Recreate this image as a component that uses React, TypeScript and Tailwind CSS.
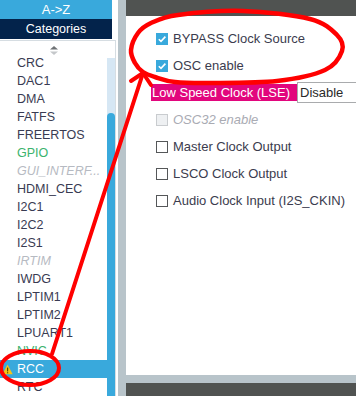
import React from "react";

type Pt = [number, number];

// closed catmull-rom curve through hand-picked points (for the marker scribbles)
function smoothPath(pts: Pt[]) {
  const n = pts.length;
  let d = `M${pts[0][0]},${pts[0][1]}`;
  for (let i = 0; i < n; i++) {
    const p0 = pts[(i - 1 + n) % n];
    const p1 = pts[i];
    const p2 = pts[(i + 1) % n];
    const p3 = pts[(i + 2) % n];
    const c1 = [p1[0] + (p2[0] - p0[0]) / 6, p1[1] + (p2[1] - p0[1]) / 6];
    const c2 = [p2[0] - (p3[0] - p1[0]) / 6, p2[1] - (p3[1] - p1[1]) / 6];
    d += ` C${c1[0]},${c1[1]} ${c2[0]},${c2[1]} ${p2[0]},${p2[1]}`;
  }
  return d + "Z";
}

const bigLoop: Pt[] = [
  [131, 50], [138, 33], [151, 23], [178, 15], [243, 11], [310, 19], [337, 35],
  [342, 51], [325, 70], [277, 81], [210, 83], [175, 82], [155, 77], [143, 72], [135, 63],
];

type Item = { name: string; kind?: "ok" | "off" | "sel" };

const items: Item[] = [
  { name: "CRC" },
  { name: "DAC1" },
  { name: "DMA" },
  { name: "FATFS" },
  { name: "FREERTOS" },
  { name: "GPIO", kind: "ok" },
  { name: "GUI_INTERF...", kind: "off" },
  { name: "HDMI_CEC" },
  { name: "I2C1" },
  { name: "I2C2" },
  { name: "I2S1" },
  { name: "IRTIM", kind: "off" },
  { name: "IWDG" },
  { name: "LPTIM1" },
  { name: "LPTIM2" },
  { name: "LPUART1" },
  { name: "NVIC", kind: "ok" },
  { name: "RCC", kind: "sel" },
  { name: "RTC" },
];

function Warning() {
  return (
    <svg width="11" height="11" viewBox="0 0 11 11" className="shrink-0">
      <polygon points="5.5,0.5 10.7,10.3 0.3,10.3" fill="#f6c516" />
      <rect x="5" y="3.6" width="1.2" height="3.8" fill="#5a4a00" />
      <rect x="5" y="8.2" width="1.2" height="1.1" fill="#5a4a00" />
    </svg>
  );
}

function ListRow({ item }: { item: Item }) {
  if (item.kind === "sel") {
    return (
      <div className="flex h-[18px] items-center bg-[#39a9dc] pl-[2px] text-white">
        <Warning />
        <span className="ml-[4px]">{item.name}</span>
      </div>
    );
  }
  const color =
    item.kind === "ok"
      ? "text-[#3bb36d]"
      : item.kind === "off"
        ? "italic text-[#b6bac2]"
        : "text-[#393b52]";
  return (
    <div className={`flex h-[18px] items-center whitespace-nowrap pl-[17px] ${color}`}>
      {item.name}
    </div>
  );
}

function Check({ state }: { state: "on" | "off" | "disabled" }) {
  if (state === "on") {
    return (
      <div className="flex h-[12px] w-[12px] shrink-0 items-center justify-center bg-[#39a9dc]">
        <svg width="10" height="10" viewBox="0 0 10 10">
          <path d="M1.8 5.2 L4 7.4 L8.4 2.6" fill="none" stroke="white" strokeWidth="1.6" />
        </svg>
      </div>
    );
  }
  if (state === "disabled") {
    return <div className="h-[12px] w-[12px] shrink-0 border border-[#c9cccf] bg-[#eef0f2]" />;
  }
  return <div className="h-[12px] w-[12px] shrink-0 border border-[#555759] bg-white" />;
}

function Option({ label, state }: { label: string; state: "on" | "off" | "disabled" }) {
  return (
    <div className="flex h-[27px] items-center gap-[5px] pl-[30px]">
      <Check state={state} />
      <span className={state === "disabled" ? "italic text-[#a9abb3]" : "text-[#3b3c4e]"}>{label}</span>
    </div>
  );
}

export default function App() {
  return (
    <div className="relative flex h-[396px] w-[356px] overflow-hidden bg-white font-['Liberation_Sans',Arial,sans-serif]">
      {/* categories column */}
      <div className="flex w-[118px] shrink-0 flex-col bg-white">
        <div className="w-[112px]">
          <div className="flex h-[19px] items-center justify-center bg-[#39a9dc] text-[13px] text-white">A-&gt;Z</div>
          <div className="flex h-[20px] items-center justify-center bg-[#03234b] text-[12.5px] text-white">Categories</div>
        </div>
        <div className="mt-[1px] flex w-[116px] flex-1 flex-col border-t border-r border-[#d6dde2]">
          <div className="flex h-[13px] w-[107px] justify-center pt-[5px]">
            <svg width="8" height="9" viewBox="0 0 8 9">
              <polygon points="0,3.5 4,0 8,3.5" fill="#6f7275" />
              <polygon points="0,5.5 8,5.5 4,9" fill="#c4c7ca" />
            </svg>
          </div>
          <div className="flex flex-1">
            <div className="w-[107px] text-[12.5px]">
              {items.map((it) => (
                <ListRow key={it.name} item={it} />
              ))}
            </div>
            <div className="mt-[4px] flex w-[8px] flex-col bg-[#d6e7f4]">
              <div className="h-[55px]" />
              <div className="flex-1 rounded-t-[4px] bg-[#39a9dc]" />
            </div>
          </div>
        </div>
      </div>

      {/* configuration panel */}
      <div className="flex flex-1 flex-col bg-[#b8c4ca] pl-[8px]">
        <div className="h-[16px] bg-[#505351]" />
        <div className="h-[359px] overflow-hidden bg-white pt-[9px] text-[13px]">
          <Option label="BYPASS Clock Source" state="on" />
          <Option label="OSC enable" state="on" />
          <div className="flex h-[27px] items-center pl-[25px]">
            <div className="flex h-[17px] w-[146px] shrink-0 items-center bg-[#e2067d] pl-[1px] text-white">
              Low Speed Clock (LSE)
            </div>
            <div className="flex h-[21px] w-[70px] shrink-0 items-center border border-[#a9abad] bg-white pl-[2px] text-[#2a2a2a]">
              Disable
            </div>
          </div>
          <Option label="OSC32 enable" state="disabled" />
          <Option label="Master Clock Output" state="off" />
          <Option label="LSCO Clock Output" state="off" />
          <Option label="Audio Clock Input (I2S_CKIN)" state="off" />
        </div>
        <div className="h-[8px]" />
        <div className="flex-1 bg-[#505351]" />
      </div>

      {/* red marker annotations */}
      <svg
        className="pointer-events-none absolute left-0 top-0"
        width="356"
        height="396"
        viewBox="0 0 356 396"
      >
        <g fill="none" stroke="#ff0000" strokeWidth="4.5" strokeLinecap="round" strokeLinejoin="round">
          <path d={smoothPath(bigLoop)} />
          <ellipse cx="30" cy="368" rx="29" ry="17" strokeWidth="4" />
          <path d="M52 354 L143 73" strokeWidth="4" />
          <path d="M131 81 L143 73 L151 85" strokeWidth="4" />
        </g>
      </svg>
    </div>
  );
}
